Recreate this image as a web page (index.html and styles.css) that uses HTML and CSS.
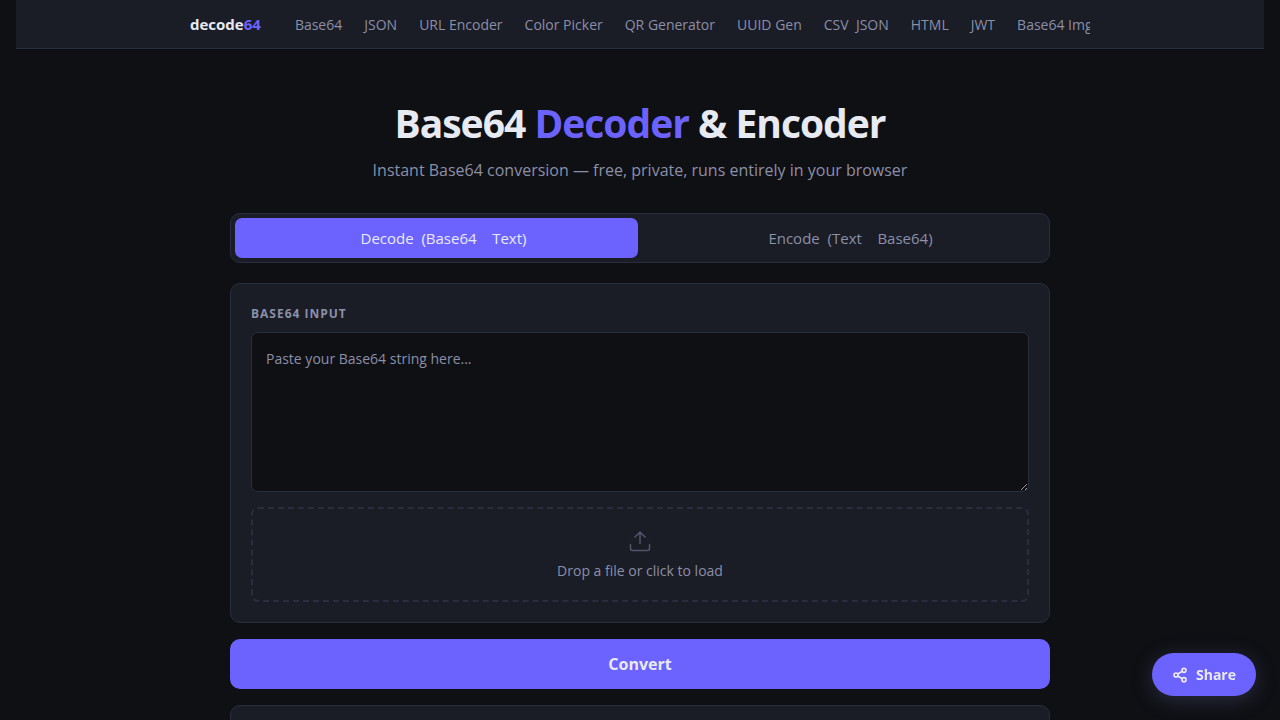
FILE: index.html
```html
<!DOCTYPE html>
<html lang="en">
<head>
<meta charset="utf-8">
<meta name="viewport" content="width=device-width, initial-scale=1">
<title>Base64 Decoder &amp; Encoder</title>
<link rel="stylesheet" href="styles.css">
</head>
<body>
<nav class="nav">
  <div class="nav-inner">
    <a class="logo" href="#">decode<span class="accent">64</span></a>
    <a class="nav-link" href="#">Base64</a>
    <a class="nav-link" href="#">JSON</a>
    <a class="nav-link" href="#">URL Encoder</a>
    <a class="nav-link" href="#">Color Picker</a>
    <a class="nav-link" href="#">QR Generator</a>
    <a class="nav-link" href="#">UUID Gen</a>
    <a class="nav-link" href="#">CSV&nbsp; JSON</a>
    <a class="nav-link" href="#">HTML</a>
    <a class="nav-link" href="#">JWT</a>
    <a class="nav-link" href="#">Base64 Img</a>
  </div>
</nav>
<main class="page">
  <header class="hero">
    <h1 class="title">Base64 <span class="accent">Decoder</span> &amp; Encoder</h1>
    <p class="subtitle">Instant Base64 conversion — free, private, runs entirely in your browser</p>
  </header>
  <div class="tabs">
    <button class="tab tab-active" type="button">Decode&nbsp; (Base64&nbsp; &nbsp; Text)</button>
    <button class="tab" type="button">Encode&nbsp; (Text&nbsp; &nbsp; Base64)</button>
  </div>
  <section class="card">
    <label class="label" for="source">Base64 Input</label>
    <textarea class="source" id="source" placeholder="Paste your Base64 string here..."></textarea>
    <button class="drop" type="button">
      <svg class="drop-icon" viewBox="0 0 24 24" fill="none" stroke="currentColor" stroke-width="1.5" stroke-linecap="round" stroke-linejoin="round" aria-hidden="true"><path d="M2.5 15.500v4a2 2 0 0 0 2 2h15a2 2 0 0 0 2-2v-4M12 14.500V3M7 8l5-5 5 5"/></svg>
      <span>Drop a file or click to load</span>
    </button>
  </section>
  <button class="convert" type="button">Convert</button>
  <section class="card">
    <textarea class="source" id="result" aria-label="Result" readonly></textarea>
  </section>
</main>
<button class="share" type="button">
  <svg class="share-icon" viewBox="0 0 24 24" fill="none" stroke="currentColor" stroke-width="2.5" stroke-linecap="round" stroke-linejoin="round" aria-hidden="true"><circle cx="18" cy="5" r="3"/><circle cx="6" cy="12" r="3"/><circle cx="18" cy="19" r="3"/><path d="M8.600 13.500l6.800 4M15.400 6.500l-6.800 4"/></svg>
  Share
</button>
</body>
</html>
```
FILE: styles.css
```css
* {
  box-sizing: border-box;
  margin: 0;
}

body {
  padding: 0 16px 48px;
  background: #0f1014;
  color: #e8eaf2;
  font-family: "Open Sans", sans-serif;
  font-size: 16px;
  line-height: 24px;
}

button,
textarea {
  font: inherit;
}

button {
  border: 0;
  cursor: pointer;
}

.accent {
  color: #6c63ff;
}

.nav {
  background: #1a1c26;
  border-bottom: 1px solid #2a2d3e;
}

.nav-inner {
  display: flex;
  align-items: baseline;
  gap: 22px;
  max-width: 900px;
  margin: 0 auto;
  padding: 12px 0 11px;
  overflow: hidden;
  white-space: nowrap;
}

.logo {
  margin-right: 12px;
  color: #e8eaf2;
  font-size: 15px;
  font-weight: 700;
  text-decoration: none;
}

.nav-link {
  color: #8b8fa8;
  font-size: 14px;
  text-decoration: none;
}

.page {
  display: flex;
  flex-direction: column;
  gap: 16px;
  max-width: 820px;
  margin: 0 auto;
  padding-top: 48px;
}

.hero {
  margin-bottom: 16px;
  text-align: center;
}

.title {
  font-size: 39px;
  font-weight: 700;
  letter-spacing: -1px;
  line-height: 52px;
}

.subtitle {
  margin-top: 10px;
  color: #8b8fa8;
  line-height: 22px;
}

.tabs {
  display: flex;
  gap: 4px;
  margin-bottom: 4px;
  padding: 4px;
  background: #1a1c26;
  border: 1px solid #2a2d3e;
  border-radius: 10px;
}

.tab {
  flex: 1;
  padding: 8px 0 8px 14px;
  background: transparent;
  border-radius: 7px;
  color: #8b8fa8;
  font-size: 15px;
}

.tab-active {
  background: #6c63ff;
  color: #e8eaf2;
}

.card {
  padding: 20px;
  background: #1a1c26;
  border: 1px solid #2a2d3e;
  border-radius: 10px;
}

.label {
  display: block;
  margin-bottom: 8px;
  color: #8b8fa8;
  font-size: 12px;
  font-weight: 700;
  letter-spacing: 1px;
  line-height: 20px;
  text-transform: uppercase;
}

.source {
  display: block;
  width: 100%;
  height: 160px;
  padding: 14px;
  background: #0f1014;
  border: 1px solid #2a2d3e;
  border-radius: 7px;
  color: #e8eaf2;
  font-size: 14px;
  outline: 0;
  resize: vertical;
}

.source::placeholder {
  color: #8b8fa8;
}

.drop {
  display: flex;
  flex-direction: column;
  align-items: center;
  gap: 8px;
  width: 100%;
  margin-top: 15px;
  padding: 20px;
  background: transparent;
  border: 2px dashed #2a2d3e;
  border-radius: 7px;
  color: #8b8fa8;
  font-size: 14px;
  line-height: 19px;
}

.drop-icon {
  width: 24px;
  height: 24px;
  opacity: 0.5;
}

.convert {
  padding: 13px;
  background: #6c63ff;
  border-radius: 10px;
  color: #e8eaf2;
  font-weight: 700;
}

.share {
  position: fixed;
  right: 24px;
  bottom: 24px;
  display: flex;
  align-items: center;
  gap: 8px;
  padding: 10px 20px;
  background: #6c63ff;
  border-radius: 24px;
  box-shadow: 0 4px 20px rgba(92, 96, 150, 0.35);
  color: #e8eaf2;
  font-size: 14px;
  font-weight: 700;
  line-height: 23px;
}

.share-icon {
  width: 16px;
  height: 16px;
}
```
